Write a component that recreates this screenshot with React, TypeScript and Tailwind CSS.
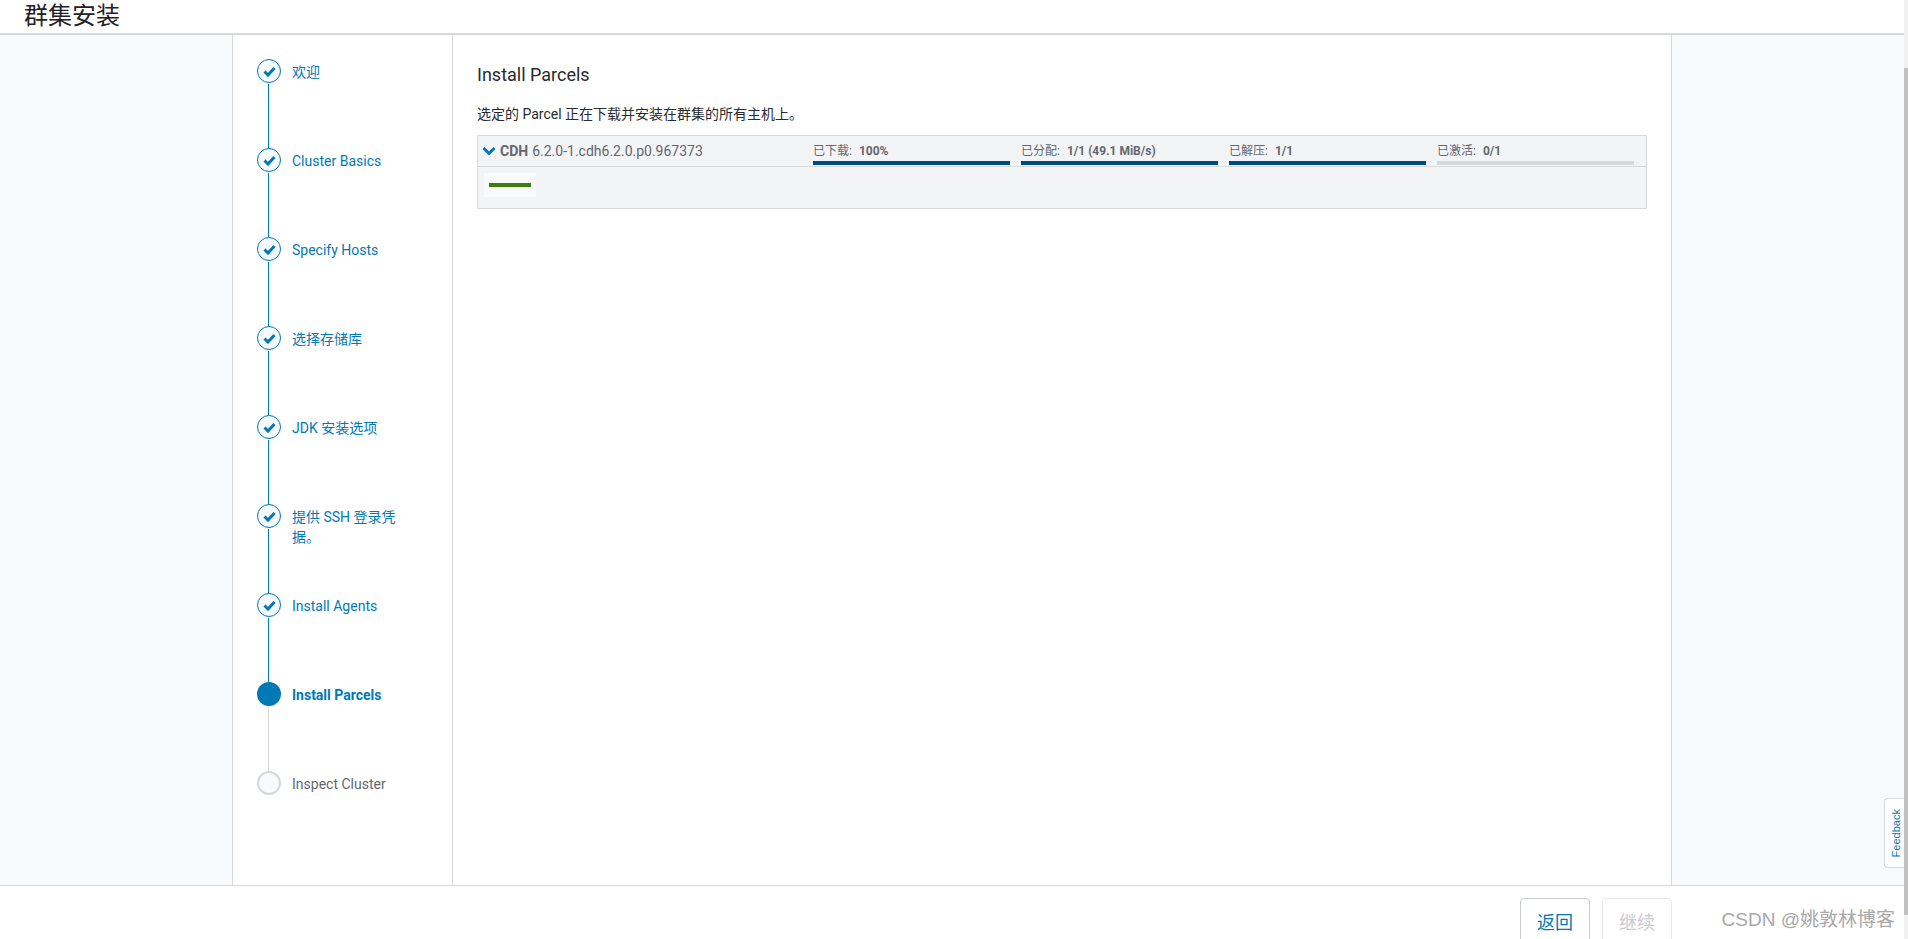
import React from 'react';

const FONT = "font-['Roboto','Noto_Sans_CJK_SC',sans-serif]";

const STEPS = [
  { label: '欢迎', state: 'done' },
  { label: 'Cluster Basics', state: 'done' },
  { label: 'Specify Hosts', state: 'done' },
  { label: '选择存储库', state: 'done' },
  { label: 'JDK 安装选项', state: 'done' },
  { label: '提供 SSH 登录凭据。', state: 'done' },
  { label: 'Install Agents', state: 'done' },
  { label: 'Install Parcels', state: 'current' },
  { label: 'Inspect Cluster', state: 'todo' },
];

const PROGRESS = [
  { label: '已下载:', value: '100%', full: true, margin: 'mr-[11px]' },
  { label: '已分配:', value: '1/1 (49.1 MiB/s)', full: true, margin: 'mr-[11px]' },
  { label: '已解压:', value: '1/1', full: true, margin: 'mr-[11px]' },
  { label: '已激活:', value: '0/1', full: false, margin: '' },
];

const StepDot = ({ state }: { state: string }) => {
  if (state === 'current') {
    return <div className="w-6 h-6 rounded-full bg-[#0079b5] shrink-0" />;
  }
  if (state === 'todo') {
    return <div className="w-6 h-6 rounded-full bg-[#f9fafc] border-2 border-[#d6d8dc] shrink-0" />;
  }
  return (
    <div className="w-6 h-6 rounded-full bg-[#f5f9fc] border border-[#0079b5] shrink-0 flex items-center justify-center">
      <svg width="13" height="11" viewBox="0 0 13 11">
        <path d="M1.5 5.5 L5 9 L11.5 2" fill="none" stroke="#0079b5" strokeWidth="3" />
      </svg>
    </div>
  );
};

const Step = ({ label, state, last, lineDone }: { label: string; state: string; last: boolean; lineDone: boolean }) => (
  <div className="flex h-[89px]">
    <div className="flex flex-col items-center w-6 shrink-0">
      <StepDot state={state} />
      {!last && <div className={`w-px flex-1 mt-px mr-px ${lineDone ? 'bg-[#0079b5]' : 'bg-[#d6d8dc]'}`} />}
    </div>
    <div
      className={`ml-[11px] w-[112px] text-[14px] leading-[20px] pt-[3px] ${
        state === 'todo' ? 'text-[#63676d]' : 'text-[#0079b5]'
      } ${state === 'current' ? 'font-bold' : ''}`}
    >
      {label}
    </div>
  </div>
);

export default function App() {
  return (
    <div className={`relative h-[939px] w-full flex flex-col overflow-hidden bg-white ${FONT}`}>
      <header className="h-[35px] shrink-0 border-b-2 border-[#d6d8dc] pl-6 mr-1 text-[24px] leading-[32px] text-[#1f2226]">
        群集安装
      </header>

      <div className="flex flex-1 min-h-0 mr-1">
        <div className="w-[233px] shrink-0 bg-[#f9fafc] border-r border-[#d6d8dc]" />
        <nav className="w-[220px] shrink-0 border-r border-[#d6d8dc] pt-[24px] pl-[24px]">
          {STEPS.map((s, i) => (
            <Step
              key={s.label}
              label={s.label}
              state={s.state}
              last={i === STEPS.length - 1}
              lineDone={s.state === 'done'}
            />
          ))}
        </nav>
        <main className="flex-1 min-w-0 pt-[28px] px-6">
          <h2 className="text-[18px] leading-6 text-[#272a2e]">Install Parcels</h2>
          <p className="mt-[17px] text-[14px] leading-[20px] text-[#272a2e]">
            选定的 Parcel 正在下载并安装在群集的所有主机上。
          </p>
          <div className="mt-[11px] border border-[#d6d8dc] bg-[#f3f4f6] h-[74px]">
            <div className="h-[31px] border-b border-[#d6d8dc] flex">
              <div className="w-[335px] shrink-0 flex items-center pl-[4px] text-[14px] text-[#63676d]">
                <svg width="14" height="10" viewBox="0 0 14 10" className="mr-[4px]">
                  <path d="M1.5 2 L7 7.5 L12.5 2" fill="none" stroke="#0079b5" strokeWidth="3" />
                </svg>
                <span className="font-bold mr-1">CDH</span>
                <span>6.2.0-1.cdh6.2.0.p0.967373</span>
              </div>
              {PROGRESS.map((p) => (
                <div key={p.label} className={`w-[197px] ${p.margin} shrink-0 flex flex-col justify-end`}>
                  <div className="text-[12px] leading-[15px] text-[#63676d] mb-[2px] whitespace-nowrap">
                    {p.label}
                    <span className="font-bold ml-[7px]">{p.value}</span>
                  </div>
                  <div className={`h-1 mb-[1px] ${p.full ? 'bg-[#004a80]' : 'bg-[#d6d8dc]'}`} />
                </div>
              ))}
            </div>
            <div className="mt-[6px] ml-[6px] w-[52px] h-[24px] bg-[#f9fafc] flex items-center justify-center">
              <div className="w-[42px] h-1 bg-[#3f7d0a]" />
            </div>
          </div>
        </main>
        <div className="w-[233px] shrink-0 bg-[#f9fafc] border-l border-[#d6d8dc]" />
      </div>

      <footer className="h-[54px] shrink-0 border-t border-[#d6d8dc] mr-1 flex justify-end pt-3 pr-[232px] gap-3 overflow-hidden">
        <button className="w-[70px] h-[50px] shrink-0 rounded border border-[#c8cbd0] text-[#0079b5] text-[18px] pb-[2px]">返回</button>
        <button className="w-[70px] h-[50px] shrink-0 rounded border border-[#e6e7ea] text-[#c8cbd0] text-[18px] pb-[2px]">继续</button>
      </footer>

      {/* scrollbar */}
      <div className="absolute top-0 right-0 w-1 h-full bg-[#f1f1f1]">
        <div className="mt-[68px] h-[847px] bg-[#c1c1c1]" />
      </div>
      {/* feedback tab */}
      <div className="absolute right-1 top-[798px] w-[20px] h-[70px] bg-white border border-[#d6d8dc] border-r-0 rounded-l-sm flex items-center justify-center">
        <span className="-rotate-90 translate-x-[2px] text-[11px] text-[#0079b5] font-['Liberation_Sans',sans-serif] whitespace-nowrap">Feedback</span>
      </div>
      {/* csdn watermark */}
      <div className="absolute right-[13px] top-[908px] text-[19px] leading-6 text-[#a8a8a8] whitespace-nowrap font-['Liberation_Sans','Noto_Sans_CJK_SC',sans-serif]">
        CSDN @姚敦林博客
      </div>
    </div>
  );
}
